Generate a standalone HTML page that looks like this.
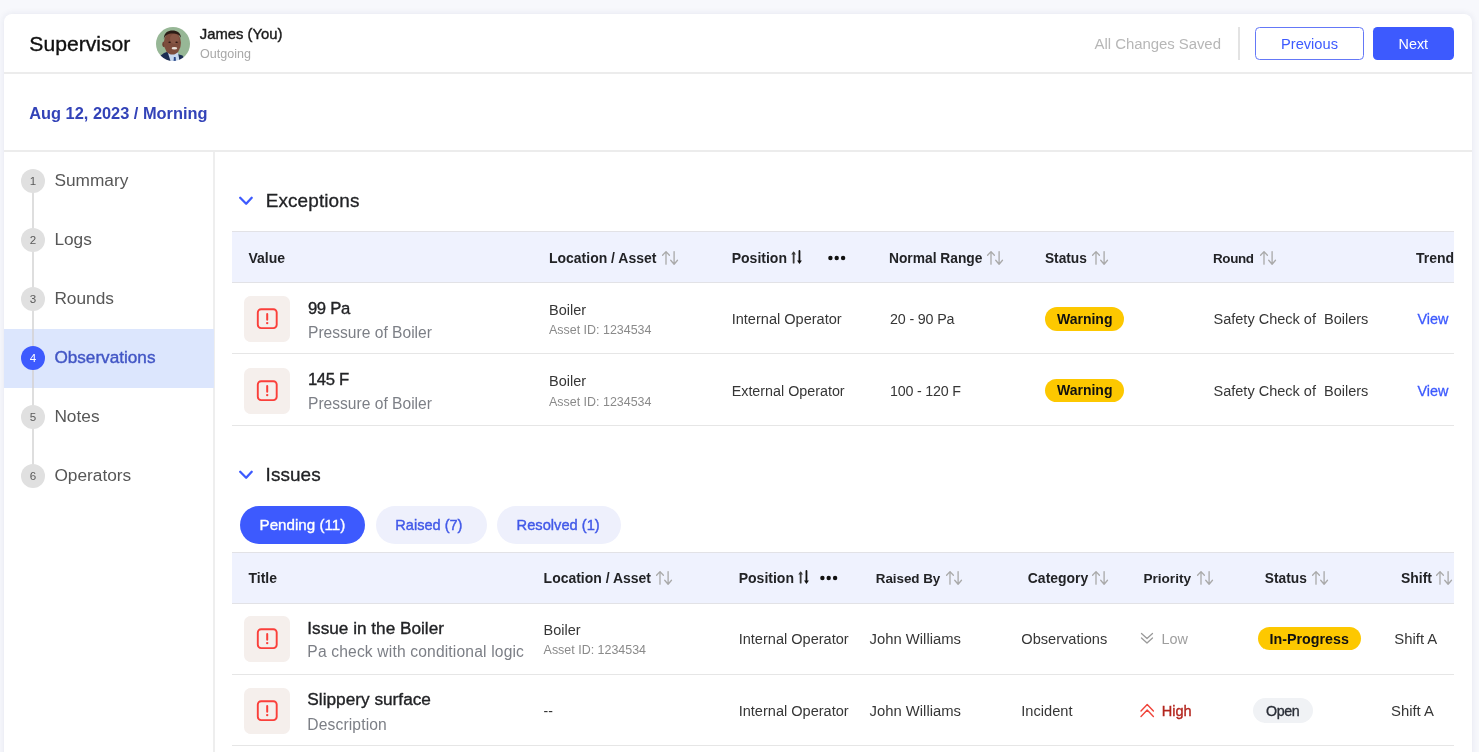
<!DOCTYPE html><html><head><meta charset="utf-8"><style>
html,body{margin:0;padding:0;}
body{width:1479px;height:752px;overflow:hidden;background:#f7f8fc;position:relative;font-family:"Liberation Sans",sans-serif;}
.t{position:absolute;white-space:pre;}
.b{position:absolute;}
svg{position:absolute;overflow:visible;}
.bm{display:inline-block;width:0;height:0;vertical-align:baseline;}
</style></head><body><div id="root" style="position:absolute;left:0;top:0;width:1479px;height:752px;will-change:transform;">
<div class="b" style="left:4px;top:14px;width:1467.5px;height:760px;background:#fff;border-radius:8px;box-shadow:0 0 7px rgba(35,45,100,0.09);"></div>
<div class="b" style="left:4px;top:72px;width:1467.5px;height:2px;background:#ececec;"></div>
<div class="b" style="left:4px;top:150px;width:1467.5px;height:2px;background:#ececec;"></div>
<div class="b" style="left:213px;top:152px;width:2px;height:620px;background:#eeeeee;"></div>
<div class="t" id="t1" style="left:29.30px;top:33.00px;font-size:21.14px;line-height:21.14px;font-weight:400;color:#111;-webkit-text-stroke:0.35px #111;letter-spacing:0.0px;">Supervisor<span class="bm"></span></div>
<svg style="left:156px;top:27px" width="34" height="34" viewBox="0 0 34 34">
<defs><clipPath id="av"><circle cx="17" cy="17" r="17"/></clipPath><filter id="bl" x="-10%" y="-10%" width="120%" height="120%"><feGaussianBlur stdDeviation="0.35"/></filter></defs>
<g clip-path="url(#av)"><g filter="url(#bl)">
<rect width="34" height="34" fill="#97b796"/>
<rect x="12" y="20" width="9.5" height="7" fill="#5b372b"/>
<path d="M1 34 L4 29 Q8 25.5 12 24.6 L17.5 34 Z" fill="#1f2f52"/>
<path d="M21.5 27 L26.5 28.5 L30 34 L19 34 Z" fill="#1f2f52"/>
<path d="M11.5 24.5 L22 25.5 L23.5 34 L14.5 34 Z" fill="#c7d8f0"/>
<path d="M17.9 30 L19.6 30 L20 34 L17.6 34Z" fill="#2b4a8a"/>
<ellipse cx="8.2" cy="17.3" rx="1.9" ry="2.8" fill="#6c4233"/>
<ellipse cx="16.4" cy="15.8" rx="8.6" ry="11.8" fill="#7d4e3e"/>
<ellipse cx="18.5" cy="12" rx="4.5" ry="5" fill="#8d5c4a" opacity="0.7"/>
<path d="M7.8 12 C8 5.5 12 3.6 16.5 3.6 C21 3.6 24.8 5.5 25 11 C23.5 7.5 21 6.6 16.5 6.6 C12 6.6 9.3 8 7.8 12 Z" fill="#2a1a14"/>
<ellipse cx="18.4" cy="21.3" rx="2.8" ry="1.25" fill="#ebe3dc"/><ellipse cx="13.6" cy="15.2" rx="1.3" ry="0.8" fill="#2a1610"/><ellipse cx="20.6" cy="15.2" rx="1.3" ry="0.8" fill="#2a1610"/>
</g></g></svg>
<div class="t" id="t2" style="left:199.80px;top:27.00px;font-size:14.81px;line-height:14.81px;font-weight:400;color:#1b1b1b;-webkit-text-stroke:0.4px #1b1b1b;letter-spacing:0.0px;">James (You)<span class="bm"></span></div>
<div class="t" id="t3" style="left:200.00px;top:48.00px;font-size:12.56px;line-height:12.56px;font-weight:400;color:#a8a8a8;letter-spacing:0.003px;">Outgoing<span class="bm"></span></div>
<div class="t" id="t4" style="left:1094.60px;top:37.01px;font-size:14.96px;line-height:14.96px;font-weight:400;color:#b7b7b7;letter-spacing:-0.052px;">All Changes Saved<span class="bm"></span></div>
<div class="b" style="left:1238px;top:27px;width:1.5px;height:33px;background:#e3e3e3;"></div>
<div class="b" style="left:1255.3px;top:27px;width:108.5px;height:33.4px;background:#fff;box-sizing:border-box;border:1.2px solid #6478f7;border-radius:4.5px;"></div>
<div class="t" id="t5" style="left:1281.00px;top:37.00px;font-size:14.65px;line-height:14.65px;font-weight:400;color:#3d5afe;letter-spacing:-0.0px;">Previous<span class="bm"></span></div>
<div class="b" style="left:1372.7px;top:27px;width:81.8px;height:33.4px;background:#3d5afe;border-radius:4.5px;"></div>
<div class="t" id="t6" style="left:1398.60px;top:37.01px;font-size:14.35px;line-height:14.35px;font-weight:400;color:#fff;letter-spacing:-0.001px;">Next<span class="bm"></span></div>
<div class="t" id="t7" style="left:29.20px;top:105.00px;font-size:16.39px;line-height:16.39px;font-weight:700;color:#3343b8;letter-spacing:-0.0px;">Aug 12, 2023 / Morning<span class="bm"></span></div>
<div class="b" style="left:32.3px;top:181px;width:1.4px;height:300px;background:#dedede;"></div>
<div class="b" style="left:20.9px;top:168.9px;width:24.6px;height:24.6px;border-radius:50%;background:#e0e0e0;"></div>
<div class="t" id="t8" style="left:29.80px;top:175.01px;font-size:11.6px;line-height:11.6px;font-weight:400;color:#5a5a5a;">1<span class="bm"></span></div>
<div class="t" id="t9" style="left:54.40px;top:172.01px;font-size:17.3px;line-height:17.3px;font-weight:400;color:#575757;">Summary<span class="bm"></span></div>
<div class="b" style="left:20.9px;top:227.9px;width:24.6px;height:24.6px;border-radius:50%;background:#e0e0e0;"></div>
<div class="t" id="t10" style="left:29.80px;top:234.01px;font-size:11.6px;line-height:11.6px;font-weight:400;color:#5a5a5a;">2<span class="bm"></span></div>
<div class="t" id="t11" style="left:54.40px;top:231.01px;font-size:17.3px;line-height:17.3px;font-weight:400;color:#575757;">Logs<span class="bm"></span></div>
<div class="b" style="left:20.9px;top:286.9px;width:24.6px;height:24.6px;border-radius:50%;background:#e0e0e0;"></div>
<div class="t" id="t12" style="left:29.80px;top:293.01px;font-size:11.6px;line-height:11.6px;font-weight:400;color:#5a5a5a;">3<span class="bm"></span></div>
<div class="t" id="t13" style="left:54.40px;top:290.01px;font-size:17.3px;line-height:17.3px;font-weight:400;color:#575757;">Rounds<span class="bm"></span></div>
<div class="b" style="left:4px;top:329px;width:209.5px;height:59px;background:#dce6fd;"></div>
<div class="b" style="left:32.3px;top:329px;width:1.4px;height:59px;background:#d6d6dc;"></div>
<div class="b" style="left:20.9px;top:345.9px;width:24.6px;height:24.6px;border-radius:50%;background:#3d5afe;"></div>
<div class="t" id="t14" style="left:29.80px;top:352.01px;font-size:11.6px;line-height:11.6px;font-weight:400;color:#fff;">4<span class="bm"></span></div>
<div class="t" id="t15" style="left:54.40px;top:349.00px;font-size:17.16px;line-height:17.16px;font-weight:400;color:#4256c5;-webkit-text-stroke:0.4px #4256c5;letter-spacing:-0.001px;">Observations<span class="bm"></span></div>
<div class="b" style="left:20.9px;top:404.9px;width:24.6px;height:24.6px;border-radius:50%;background:#e0e0e0;"></div>
<div class="t" id="t16" style="left:29.80px;top:411.01px;font-size:11.6px;line-height:11.6px;font-weight:400;color:#5a5a5a;">5<span class="bm"></span></div>
<div class="t" id="t17" style="left:54.40px;top:408.01px;font-size:17.3px;line-height:17.3px;font-weight:400;color:#575757;">Notes<span class="bm"></span></div>
<div class="b" style="left:20.9px;top:463.9px;width:24.6px;height:24.6px;border-radius:50%;background:#e0e0e0;"></div>
<div class="t" id="t18" style="left:29.80px;top:470.01px;font-size:11.6px;line-height:11.6px;font-weight:400;color:#5a5a5a;">6<span class="bm"></span></div>
<div class="t" id="t19" style="left:54.40px;top:467.01px;font-size:17.3px;line-height:17.3px;font-weight:400;color:#575757;">Operators<span class="bm"></span></div>
<svg style="left:239px;top:196px" width="14" height="9" viewBox="0 0 14 9"><path d="M1.2 1.8 L7.15 7.75 L12.7 1.8" fill="none" stroke="#3d5afe" stroke-width="2.3" stroke-linecap="round" stroke-linejoin="round"/></svg>
<div class="t" id="t20" style="left:265.70px;top:192.00px;font-size:18.94px;line-height:18.94px;font-weight:400;color:#222326;-webkit-text-stroke:0.3px #222326;letter-spacing:0.116px;">Exceptions<span class="bm"></span></div>
<div class="b" style="left:232px;top:231px;width:1222px;height:1px;background:#e2e2e6;"></div>
<div class="b" style="left:232px;top:232px;width:1222px;height:50px;background:#eff2fe;"></div>
<div class="b" style="left:232px;top:282px;width:1222px;height:1px;background:#e2e2e6;"></div>
<div class="t" id="t21" style="left:248.50px;top:251.01px;font-size:14.01px;line-height:14.01px;font-weight:700;color:#222326;letter-spacing:-0.002px;">Value<span class="bm"></span></div>
<div class="t" id="t22" style="left:549.00px;top:251.00px;font-size:13.98px;line-height:13.98px;font-weight:700;color:#222326;letter-spacing:0.002px;">Location / Asset<span class="bm"></span></div>
<svg style="left:661.5px;top:250.5px" width="17" height="14" viewBox="0 0 17 14"><g fill="none" stroke="#a9a9a9" stroke-width="1.3" stroke-linecap="round" stroke-linejoin="round"><path d="M4 0.6 V13.2 M0.6 4.3 L4 0.6 L7.4 4.3"/><path d="M12.1 0.6 V13.2 M8.7 9.3 L12.1 13.2 L15.5 9.3"/></g></svg>
<div class="t" id="t23" style="left:731.70px;top:251.00px;font-size:14.02px;line-height:14.02px;font-weight:700;color:#222326;letter-spacing:0.001px;">Position<span class="bm"></span></div>
<svg style="left:790.8px;top:249.8px" width="12" height="15" viewBox="0 0 12 15"><path d="M2.65 3 V12.7" stroke="#3a3a3a" stroke-width="1.8" stroke-linecap="round"/><path d="M0.3 4.4 L2.65 1.2 L5 4.4Z" fill="#3a3a3a"/><path d="M8.45 1 V11.5" stroke="#111" stroke-width="1.8" stroke-linecap="round"/><path d="M6 10.6 L8.45 14 L10.9 10.6Z" fill="#111"/></svg>
<svg style="left:828px;top:254.6px" width="18" height="6" viewBox="0 0 18 6"><circle cx="2.4" cy="3" r="2.2" fill="#111"/><circle cx="8.7" cy="3" r="2.2" fill="#111"/><circle cx="15.1" cy="3" r="2.2" fill="#111"/></svg>
<div class="t" id="t24" style="left:889.00px;top:252.01px;font-size:13.79px;line-height:13.79px;font-weight:700;color:#222326;letter-spacing:0.002px;">Normal Range<span class="bm"></span></div>
<svg style="left:987px;top:250.5px" width="17" height="14" viewBox="0 0 17 14"><g fill="none" stroke="#a9a9a9" stroke-width="1.3" stroke-linecap="round" stroke-linejoin="round"><path d="M4 0.6 V13.2 M0.6 4.3 L4 0.6 L7.4 4.3"/><path d="M12.1 0.6 V13.2 M8.7 9.3 L12.1 13.2 L15.5 9.3"/></g></svg>
<div class="t" id="t25" style="left:1044.90px;top:252.00px;font-size:13.74px;line-height:13.74px;font-weight:700;color:#222326;letter-spacing:0.002px;">Status<span class="bm"></span></div>
<svg style="left:1092px;top:250.5px" width="17" height="14" viewBox="0 0 17 14"><g fill="none" stroke="#a9a9a9" stroke-width="1.3" stroke-linecap="round" stroke-linejoin="round"><path d="M4 0.6 V13.2 M0.6 4.3 L4 0.6 L7.4 4.3"/><path d="M12.1 0.6 V13.2 M8.7 9.3 L12.1 13.2 L15.5 9.3"/></g></svg>
<div class="t" id="t26" style="left:1213.00px;top:252.00px;font-size:13.43px;line-height:13.43px;font-weight:700;color:#222326;letter-spacing:-0.38px;">Round<span class="bm"></span></div>
<svg style="left:1260px;top:250.5px" width="17" height="14" viewBox="0 0 17 14"><g fill="none" stroke="#a9a9a9" stroke-width="1.3" stroke-linecap="round" stroke-linejoin="round"><path d="M4 0.6 V13.2 M0.6 4.3 L4 0.6 L7.4 4.3"/><path d="M12.1 0.6 V13.2 M8.7 9.3 L12.1 13.2 L15.5 9.3"/></g></svg>
<div class="b" style="left:1410px;top:240px;width:44px;height:35px;overflow:hidden">
<div class="t" id="t27" style="left:6.00px;top:11.00px;font-size:14.0px;line-height:14.0px;font-weight:700;color:#222326;">Trend<span class="bm"></span></div>
</div>
<div class="b" style="left:244px;top:296.0px;width:46px;height:46px;background:#f5efec;border-radius:6.5px;"></div>
<svg style="left:256px;top:308.0px" width="22" height="22" viewBox="0 0 22 22"><rect x="1.8" y="1.2" width="18.9" height="18.9" rx="3.3" fill="none" stroke="#fa3f3a" stroke-width="1.9"/><path d="M11.2 5.9 V11.8" stroke="#fa3f3a" stroke-width="2" stroke-linecap="round"/><circle cx="11.2" cy="15.1" r="1.2" fill="#fa3f3a"/></svg>
<div class="t" id="t28" style="left:307.90px;top:301.00px;font-size:16.69px;line-height:16.69px;font-weight:400;color:#222326;-webkit-text-stroke:0.35px #222326;letter-spacing:-0.319px;">99 Pa<span class="bm"></span></div>
<div class="t" id="t29" style="left:308.00px;top:325.00px;font-size:15.6px;line-height:15.6px;font-weight:400;color:#7c7f86;letter-spacing:0.001px;">Pressure of Boiler<span class="bm"></span></div>
<div class="t" id="t30" style="left:549.00px;top:303.00px;font-size:14.47px;line-height:14.47px;font-weight:400;color:#363636;letter-spacing:0.0px;">Boiler<span class="bm"></span></div>
<div class="t" id="t31" style="left:549.00px;top:324.01px;font-size:12.46px;line-height:12.46px;font-weight:400;color:#8a8a8a;letter-spacing:-0.001px;">Asset ID: 1234534<span class="bm"></span></div>
<div class="t" id="t32" style="left:731.70px;top:312.01px;font-size:14.55px;line-height:14.55px;font-weight:400;color:#363636;letter-spacing:0.0px;">Internal Operator<span class="bm"></span></div>
<div class="t" id="t33" style="left:890.00px;top:312.00px;font-size:14.28px;line-height:14.28px;font-weight:400;color:#363636;letter-spacing:-0.145px;">20 - 90 Pa<span class="bm"></span></div>
<div class="b" style="left:1045.2px;top:307.0px;width:78.5px;height:23.7px;background:#fdc800;border-radius:12px;"></div>
<div class="t" id="t34" style="left:1057.00px;top:312.01px;font-size:14.01px;line-height:14.01px;font-weight:700;color:#111;letter-spacing:-0.001px;">Warning<span class="bm"></span></div>
<div class="t" id="t35" style="left:1213.50px;top:312.01px;font-size:14.53px;line-height:14.53px;font-weight:400;color:#363636;letter-spacing:-0.002px;">Safety Check of  Boilers<span class="bm"></span></div>
<div class="t" id="t36" style="left:1417.40px;top:312.11px;font-size:14.41px;line-height:14.41px;font-weight:400;color:#3d5afe;-webkit-text-stroke:0.3px #3d5afe;letter-spacing:-0.003px;">View<span class="bm"></span></div>
<div class="b" style="left:232px;top:353.0px;width:1222px;height:1px;background:#e6e6e6;"></div>
<div class="b" style="left:244px;top:367.5px;width:46px;height:46px;background:#f5efec;border-radius:6.5px;"></div>
<svg style="left:256px;top:379.5px" width="22" height="22" viewBox="0 0 22 22"><rect x="1.8" y="1.2" width="18.9" height="18.9" rx="3.3" fill="none" stroke="#fa3f3a" stroke-width="1.9"/><path d="M11.2 5.9 V11.8" stroke="#fa3f3a" stroke-width="2" stroke-linecap="round"/><circle cx="11.2" cy="15.1" r="1.2" fill="#fa3f3a"/></svg>
<div class="t" id="t37" style="left:307.90px;top:372.00px;font-size:16.69px;line-height:16.69px;font-weight:400;color:#222326;-webkit-text-stroke:0.35px #222326;letter-spacing:-0.357px;">145 F<span class="bm"></span></div>
<div class="t" id="t38" style="left:308.00px;top:396.00px;font-size:15.6px;line-height:15.6px;font-weight:400;color:#7c7f86;letter-spacing:0.001px;">Pressure of Boiler<span class="bm"></span></div>
<div class="t" id="t39" style="left:549.00px;top:374.00px;font-size:14.47px;line-height:14.47px;font-weight:400;color:#363636;letter-spacing:0.0px;">Boiler<span class="bm"></span></div>
<div class="t" id="t40" style="left:549.00px;top:396.01px;font-size:12.46px;line-height:12.46px;font-weight:400;color:#8a8a8a;letter-spacing:-0.001px;">Asset ID: 1234534<span class="bm"></span></div>
<div class="t" id="t41" style="left:731.70px;top:384.00px;font-size:14.32px;line-height:14.32px;font-weight:400;color:#363636;letter-spacing:-0.002px;">External Operator<span class="bm"></span></div>
<div class="t" id="t42" style="left:890.00px;top:384.00px;font-size:14.28px;line-height:14.28px;font-weight:400;color:#363636;letter-spacing:-0.203px;">100 - 120 F<span class="bm"></span></div>
<div class="b" style="left:1045.2px;top:378.5px;width:78.5px;height:23.7px;background:#fdc800;border-radius:12px;"></div>
<div class="t" id="t43" style="left:1057.00px;top:383.01px;font-size:14.01px;line-height:14.01px;font-weight:700;color:#111;letter-spacing:-0.001px;">Warning<span class="bm"></span></div>
<div class="t" id="t44" style="left:1213.50px;top:384.01px;font-size:14.53px;line-height:14.53px;font-weight:400;color:#363636;letter-spacing:-0.002px;">Safety Check of  Boilers<span class="bm"></span></div>
<div class="t" id="t45" style="left:1417.40px;top:384.11px;font-size:14.41px;line-height:14.41px;font-weight:400;color:#3d5afe;-webkit-text-stroke:0.3px #3d5afe;letter-spacing:-0.003px;">View<span class="bm"></span></div>
<div class="b" style="left:232px;top:424.5px;width:1222px;height:1px;background:#e6e6e6;"></div>
<svg style="left:239px;top:470px" width="14" height="9" viewBox="0 0 14 9"><path d="M1.2 1.8 L7.15 7.75 L12.7 1.8" fill="none" stroke="#3d5afe" stroke-width="2.3" stroke-linecap="round" stroke-linejoin="round"/></svg>
<div class="t" id="t46" style="left:265.60px;top:466.00px;font-size:18.94px;line-height:18.94px;font-weight:400;color:#222326;-webkit-text-stroke:0.3px #222326;letter-spacing:0.073px;">Issues<span class="bm"></span></div>
<div class="b" style="left:240px;top:506px;width:125px;height:38px;background:#3d5afe;border-radius:19px;"></div>
<div class="t" id="t47" style="left:259.60px;top:517.01px;font-size:15.15px;line-height:15.15px;font-weight:400;color:#fff;-webkit-text-stroke:0.35px #fff;letter-spacing:0.002px;">Pending (11)<span class="bm"></span></div>
<div class="b" style="left:376px;top:506px;width:110.5px;height:38px;background:#eef0fc;border-radius:19px;"></div>
<div class="t" id="t48" style="left:395.30px;top:518.02px;font-size:14.57px;line-height:14.57px;font-weight:400;color:#4259e8;-webkit-text-stroke:0.4px #4259e8;letter-spacing:-0.001px;">Raised (7)<span class="bm"></span></div>
<div class="b" style="left:497px;top:506px;width:123.5px;height:38px;background:#eef0fc;border-radius:19px;"></div>
<div class="t" id="t49" style="left:516.60px;top:518.02px;font-size:14.66px;line-height:14.66px;font-weight:400;color:#4259e8;-webkit-text-stroke:0.4px #4259e8;letter-spacing:-0.001px;">Resolved (1)<span class="bm"></span></div>
<div class="b" style="left:232px;top:552px;width:1222px;height:1px;background:#e2e2e6;"></div>
<div class="b" style="left:232px;top:553px;width:1222px;height:50px;background:#eff2fe;"></div>
<div class="b" style="left:232px;top:602.5px;width:1222px;height:1px;background:#e2e2e6;"></div>
<div class="t" id="t50" style="left:248.50px;top:572.01px;font-size:13.94px;line-height:13.94px;font-weight:700;color:#222326;letter-spacing:-0.002px;">Title<span class="bm"></span></div>
<div class="t" id="t51" style="left:543.60px;top:571.00px;font-size:13.98px;line-height:13.98px;font-weight:700;color:#222326;letter-spacing:0.002px;">Location / Asset<span class="bm"></span></div>
<svg style="left:656px;top:571px" width="17" height="14" viewBox="0 0 17 14"><g fill="none" stroke="#a9a9a9" stroke-width="1.3" stroke-linecap="round" stroke-linejoin="round"><path d="M4 0.6 V13.2 M0.6 4.3 L4 0.6 L7.4 4.3"/><path d="M12.1 0.6 V13.2 M8.7 9.3 L12.1 13.2 L15.5 9.3"/></g></svg>
<div class="t" id="t52" style="left:738.70px;top:571.00px;font-size:14.02px;line-height:14.02px;font-weight:700;color:#222326;letter-spacing:0.001px;">Position<span class="bm"></span></div>
<svg style="left:797.8px;top:570.3px" width="12" height="15" viewBox="0 0 12 15"><path d="M2.65 3 V12.7" stroke="#3a3a3a" stroke-width="1.8" stroke-linecap="round"/><path d="M0.3 4.4 L2.65 1.2 L5 4.4Z" fill="#3a3a3a"/><path d="M8.45 1 V11.5" stroke="#111" stroke-width="1.8" stroke-linecap="round"/><path d="M6 10.6 L8.45 14 L10.9 10.6Z" fill="#111"/></svg>
<svg style="left:819.5px;top:575px" width="18" height="6" viewBox="0 0 18 6"><circle cx="2.4" cy="3" r="2.2" fill="#111"/><circle cx="8.7" cy="3" r="2.2" fill="#111"/><circle cx="15.1" cy="3" r="2.2" fill="#111"/></svg>
<div class="t" id="t53" style="left:875.80px;top:572.00px;font-size:13.43px;line-height:13.43px;font-weight:700;color:#222326;letter-spacing:-0.054px;">Raised By<span class="bm"></span></div>
<svg style="left:946px;top:571px" width="17" height="14" viewBox="0 0 17 14"><g fill="none" stroke="#a9a9a9" stroke-width="1.3" stroke-linecap="round" stroke-linejoin="round"><path d="M4 0.6 V13.2 M0.6 4.3 L4 0.6 L7.4 4.3"/><path d="M12.1 0.6 V13.2 M8.7 9.3 L12.1 13.2 L15.5 9.3"/></g></svg>
<div class="t" id="t54" style="left:1027.80px;top:572.00px;font-size:13.96px;line-height:13.96px;font-weight:700;color:#222326;letter-spacing:-0.002px;">Category<span class="bm"></span></div>
<svg style="left:1092px;top:571px" width="17" height="14" viewBox="0 0 17 14"><g fill="none" stroke="#a9a9a9" stroke-width="1.3" stroke-linecap="round" stroke-linejoin="round"><path d="M4 0.6 V13.2 M0.6 4.3 L4 0.6 L7.4 4.3"/><path d="M12.1 0.6 V13.2 M8.7 9.3 L12.1 13.2 L15.5 9.3"/></g></svg>
<div class="t" id="t55" style="left:1143.40px;top:572.01px;font-size:13.62px;line-height:13.62px;font-weight:700;color:#222326;letter-spacing:0.002px;">Priority<span class="bm"></span></div>
<svg style="left:1196.5px;top:571px" width="17" height="14" viewBox="0 0 17 14"><g fill="none" stroke="#a9a9a9" stroke-width="1.3" stroke-linecap="round" stroke-linejoin="round"><path d="M4 0.6 V13.2 M0.6 4.3 L4 0.6 L7.4 4.3"/><path d="M12.1 0.6 V13.2 M8.7 9.3 L12.1 13.2 L15.5 9.3"/></g></svg>
<div class="t" id="t56" style="left:1264.80px;top:572.00px;font-size:13.74px;line-height:13.74px;font-weight:700;color:#222326;letter-spacing:0.002px;">Status<span class="bm"></span></div>
<svg style="left:1312px;top:571px" width="17" height="14" viewBox="0 0 17 14"><g fill="none" stroke="#a9a9a9" stroke-width="1.3" stroke-linecap="round" stroke-linejoin="round"><path d="M4 0.6 V13.2 M0.6 4.3 L4 0.6 L7.4 4.3"/><path d="M12.1 0.6 V13.2 M8.7 9.3 L12.1 13.2 L15.5 9.3"/></g></svg>
<div class="t" id="t57" style="left:1401.00px;top:572.01px;font-size:13.95px;line-height:13.95px;font-weight:700;color:#222326;letter-spacing:0.001px;">Shift<span class="bm"></span></div>
<svg style="left:1436px;top:571px" width="17" height="14" viewBox="0 0 17 14"><g fill="none" stroke="#a9a9a9" stroke-width="1.3" stroke-linecap="round" stroke-linejoin="round"><path d="M4 0.6 V13.2 M0.6 4.3 L4 0.6 L7.4 4.3"/><path d="M12.1 0.6 V13.2 M8.7 9.3 L12.1 13.2 L15.5 9.3"/></g></svg>
<div class="b" style="left:244px;top:615.5px;width:46px;height:46px;background:#f5efec;border-radius:6.5px;"></div>
<svg style="left:256px;top:627.5px" width="22" height="22" viewBox="0 0 22 22"><rect x="1.8" y="1.2" width="18.9" height="18.9" rx="3.3" fill="none" stroke="#fa3f3a" stroke-width="1.9"/><path d="M11.2 5.9 V11.8" stroke="#fa3f3a" stroke-width="2" stroke-linecap="round"/><circle cx="11.2" cy="15.1" r="1.2" fill="#fa3f3a"/></svg>
<div class="t" id="t58" style="left:307.30px;top:620.00px;font-size:17.19px;line-height:17.19px;font-weight:400;color:#222326;-webkit-text-stroke:0.35px #222326;letter-spacing:0.0px;">Issue in the Boiler<span class="bm"></span></div>
<div class="t" id="t59" style="left:307.30px;top:644.01px;font-size:15.63px;line-height:15.63px;font-weight:400;color:#7c7f86;letter-spacing:0.157px;">Pa check with conditional logic<span class="bm"></span></div>
<div class="t" id="t60" style="left:543.60px;top:623.00px;font-size:14.47px;line-height:14.47px;font-weight:400;color:#363636;letter-spacing:0.0px;">Boiler<span class="bm"></span></div>
<div class="t" id="t61" style="left:543.60px;top:644.01px;font-size:12.46px;line-height:12.46px;font-weight:400;color:#8a8a8a;letter-spacing:-0.001px;">Asset ID: 1234534<span class="bm"></span></div>
<div class="t" id="t62" style="left:738.70px;top:632.01px;font-size:14.55px;line-height:14.55px;font-weight:400;color:#363636;letter-spacing:0.0px;">Internal Operator<span class="bm"></span></div>
<div class="t" id="t63" style="left:869.60px;top:632.00px;font-size:14.82px;line-height:14.82px;font-weight:400;color:#363636;letter-spacing:-0.001px;">John Williams<span class="bm"></span></div>
<div class="t" id="t64" style="left:1021.30px;top:632.00px;font-size:14.6px;line-height:14.6px;font-weight:400;color:#363636;letter-spacing:-0.002px;">Observations<span class="bm"></span></div>
<svg style="left:1140px;top:632px" width="14" height="13" viewBox="0 0 14 13"><g fill="none" stroke="#9a9a9a" stroke-width="1.3" stroke-linecap="round" stroke-linejoin="round"><path d="M1.5 1.5 L7 6.5 L12.5 1.5"/><path d="M1.5 6 L7 11 L12.5 6"/></g></svg>
<div class="t" id="t65" style="left:1161.50px;top:632.00px;font-size:14.43px;line-height:14.43px;font-weight:400;color:#9e9e9e;letter-spacing:-0.004px;">Low<span class="bm"></span></div>
<div class="b" style="left:1258px;top:627px;width:102.5px;height:23px;background:#fdc800;border-radius:11.5px;"></div>
<div class="t" id="t66" style="left:1269.60px;top:632.01px;font-size:14.27px;line-height:14.27px;font-weight:700;color:#111;letter-spacing:0.0px;">In-Progress<span class="bm"></span></div>
<div class="t" id="t67" style="left:1394.30px;top:632.01px;font-size:14.87px;line-height:14.87px;font-weight:400;color:#363636;letter-spacing:0.002px;">Shift A<span class="bm"></span></div>
<div class="b" style="left:232px;top:673.5px;width:1222px;height:1px;background:#e6e6e6;"></div>
<div class="b" style="left:244px;top:687.5px;width:46px;height:46px;background:#f5efec;border-radius:6.5px;"></div>
<svg style="left:256px;top:699.5px" width="22" height="22" viewBox="0 0 22 22"><rect x="1.8" y="1.2" width="18.9" height="18.9" rx="3.3" fill="none" stroke="#fa3f3a" stroke-width="1.9"/><path d="M11.2 5.9 V11.8" stroke="#fa3f3a" stroke-width="2" stroke-linecap="round"/><circle cx="11.2" cy="15.1" r="1.2" fill="#fa3f3a"/></svg>
<div class="t" id="t68" style="left:307.30px;top:691.00px;font-size:17.25px;line-height:17.25px;font-weight:400;color:#222326;-webkit-text-stroke:0.35px #222326;letter-spacing:-0.002px;">Slippery surface<span class="bm"></span></div>
<div class="t" id="t69" style="left:307.30px;top:717.01px;font-size:15.63px;line-height:15.63px;font-weight:400;color:#7c7f86;letter-spacing:0.132px;">Description<span class="bm"></span></div>
<div class="t" id="t70" style="left:543.60px;top:704.01px;font-size:14px;line-height:14px;font-weight:400;color:#363636;">--<span class="bm"></span></div>
<div class="t" id="t71" style="left:738.70px;top:704.01px;font-size:14.55px;line-height:14.55px;font-weight:400;color:#363636;letter-spacing:0.0px;">Internal Operator<span class="bm"></span></div>
<div class="t" id="t72" style="left:869.60px;top:704.00px;font-size:14.82px;line-height:14.82px;font-weight:400;color:#363636;letter-spacing:-0.001px;">John Williams<span class="bm"></span></div>
<div class="t" id="t73" style="left:1021.30px;top:704.00px;font-size:14.62px;line-height:14.62px;font-weight:400;color:#363636;letter-spacing:0.0px;">Incident<span class="bm"></span></div>
<svg style="left:1140px;top:703px" width="15" height="15" viewBox="0 0 15 15"><g fill="none" stroke="#f0443a" stroke-width="1.4" stroke-linecap="round" stroke-linejoin="round"><path d="M1 8 L7.2 1.5 L13.4 8"/><path d="M1 13.5 L7.2 7 L13.4 13.5"/></g></svg>
<div class="t" id="t74" style="left:1161.70px;top:704.00px;font-size:14.56px;line-height:14.56px;font-weight:400;color:#b3261e;-webkit-text-stroke:0.35px #b3261e;letter-spacing:0.0px;">High<span class="bm"></span></div>
<div class="b" style="left:1253px;top:698px;width:59.5px;height:25px;background:#f0f2f5;border-radius:12.5px;"></div>
<div class="t" id="t75" style="left:1266.00px;top:704.01px;font-size:14.28px;line-height:14.28px;font-weight:400;color:#2b2f38;-webkit-text-stroke:0.35px #2b2f38;letter-spacing:-0.426px;">Open<span class="bm"></span></div>
<div class="t" id="t76" style="left:1391.00px;top:704.01px;font-size:14.87px;line-height:14.87px;font-weight:400;color:#363636;letter-spacing:0.002px;">Shift A<span class="bm"></span></div>
<div class="b" style="left:232px;top:745px;width:1222px;height:1px;background:#e6e6e6;"></div>
</div></body></html>
